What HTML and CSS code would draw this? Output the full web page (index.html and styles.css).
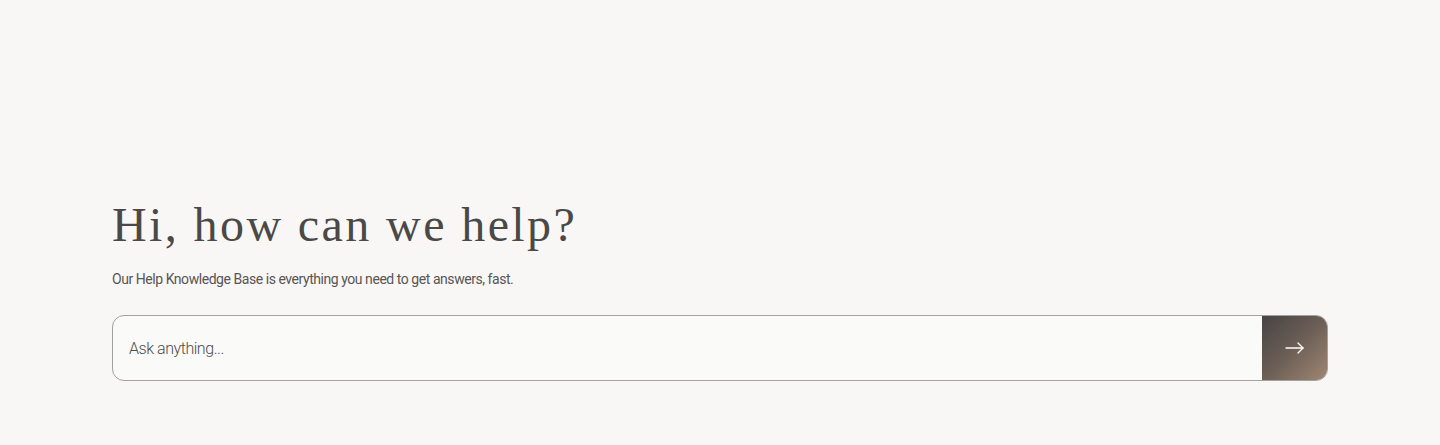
FILE: index.html
```html
<!DOCTYPE html>
<html lang="en">
<head>
    <meta charset="UTF-8">
    <meta name="viewport" content="width=device-width, initial-scale=1.0">
    <title>Help Center</title>
    <link rel="stylesheet" href="styles.css">
</head>
<body>
<section class="hero">
    <h1 class="hero-title">Hi, how can we help?</h1>
    <p class="hero-sub">Our Help Knowledge Base is everything you need to get answers, fast.</p>

    <!-- search -->
    <form class="search" onsubmit="return false;">
        <input type="text" class="search-input" placeholder="Ask anything...">
        <button type="submit" class="search-btn" aria-label="Search">
            <svg width="20" height="12" viewBox="0 0 20 12" fill="none" stroke="#fff" stroke-width="1.3" stroke-linecap="round" stroke-linejoin="round">
                <path d="M1 6h17"/>
                <path d="M13 1l5 5-5 5"/>
            </svg>
        </button>
    </form>
</section>
</body>
</html>
```

FILE: styles.css
```css
:root {
    --bg: #f8f7f5;
    --text-dark: #4b4947;
    --text-mid: #585553;
    --border: #a3a19f;
}

body {
    margin: 0;
    padding: 0;
    background: var(--bg);
    font-family: 'Roboto', sans-serif;
}

.hero {
    padding: 196px 112px 0;
}

.hero-title {
    margin: 0;
    font-family: 'Liberation Serif', serif;
    font-weight: normal;
    font-size: 48px;
    line-height: 58px;
    letter-spacing: 2.4px;
    color: var(--text-dark);
}

.hero-sub {
    margin: 16px 0 0;
    font-size: 14px;
    line-height: 18px;
    letter-spacing: -0.45px;
    color: var(--text-mid);
}

.search {
    display: flex;
    margin-top: 27px;
    height: 66px;
    border: 1px solid var(--border);
    border-radius: 12px;
    overflow: hidden;
    background: #fafaf8;
    box-sizing: border-box;
}

.search-input {
    flex: 1;
    border: none;
    background: transparent;
    padding: 0 16px;
    font-family: 'Roboto', sans-serif;
    font-weight: 300;
    font-size: 16px;
    letter-spacing: -0.45px;
    color: var(--text-dark);
}

.search-input::placeholder {
    color: #4e4c4a;
}

.search-input:focus {
    outline: none;
}

.search-btn {
    width: 65px;
    border: none;
    background: linear-gradient(135deg, #464443 0%, #6c5f56 50%, #a08672 100%);
    display: flex;
    align-items: center;
    justify-content: center;
    cursor: pointer;
}
```
